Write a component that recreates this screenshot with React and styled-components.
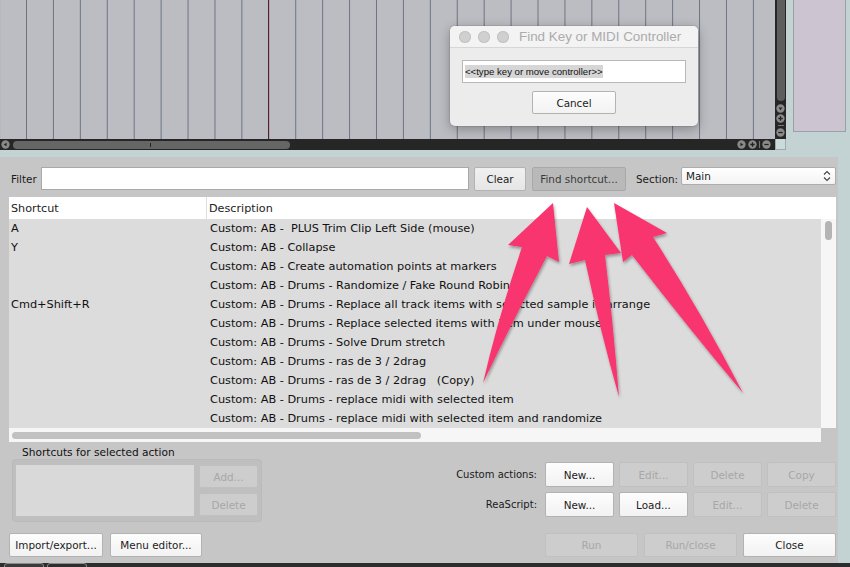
import React from 'react'
import styled, { createGlobalStyle } from 'styled-components'

const UI = '"DejaVu Sans", "Liberation Sans", sans-serif'

const rows = [
    ['A', 'Custom: AB -  PLUS Trim Clip Left Side (mouse)'],
    ['Y', 'Custom: AB - Collapse'],
    ['', 'Custom: AB - Create automation points at markers'],
    ['', 'Custom: AB - Drums - Randomize / Fake Round Robin'],
    ['Cmd+Shift+R', 'Custom: AB - Drums - Replace all track items with selected sample in arrange'],
    ['', 'Custom: AB - Drums - Replace selected items with item under mouse'],
    ['', 'Custom: AB - Drums - Solve Drum stretch'],
    ['', 'Custom: AB - Drums - ras de 3 / 2drag'],
    ['', 'Custom: AB - Drums - ras de 3 / 2drag   (Copy)'],
    ['', 'Custom: AB - Drums - replace midi with selected item'],
    ['', 'Custom: AB - Drums - replace midi with selected item and randomize'],
]

const RoundIcon = ({ kind }) => (
    <svg width="9" height="9" viewBox="0 0 10 10">
        <circle cx="5" cy="5" r="4.6" fill="#8a8a8a" />
        {kind === 'play' && <path d="M3.8 3 L7 5 L3.8 7 Z" fill="#222" />}
        {kind === 'back' && <path d="M6.2 3 L3 5 L6.2 7 Z" fill="#222" />}
        {kind === 'down' && <path d="M3 3.8 L5 7 L7 3.8 Z" fill="#222" />}
        {kind === 'plus' && <path d="M5 2.6 V7.4 M2.6 5 H7.4" stroke="#222" strokeWidth="1.4" />}
        {kind === 'minus' && <path d="M2.6 5 H7.4" stroke="#222" strokeWidth="1.4" />}
    </svg>
)

const App = () => {
    return (
        <>
            <GlobalStyle />
            <Screen>
                <ArrangeArea>
                    <TrackView>
                        <Timeline />
                        <VScroll>
                            <VThumb />
                            <ScrollButtons $vertical>
                                <RoundIcon kind="down" />
                                <RoundIcon kind="plus" />
                                <Tick $vertical />
                                <RoundIcon kind="minus" />
                            </ScrollButtons>
                        </VScroll>
                        <HScroll>
                            <RoundIcon kind="back" />
                            <HThumb>
                                <ThumbMark />
                            </HThumb>
                            <ScrollButtons>
                                <RoundIcon kind="play" />
                                <RoundIcon kind="plus" />
                                <Tick />
                                <RoundIcon kind="minus" />
                            </ScrollButtons>
                        </HScroll>
                        <Corner />
                    </TrackView>
                    <SidePanel />
                </ArrangeArea>

                <ActionsWindow>
                    <FilterRow>
                        <Label $w={30}>Filter</Label>
                        <TextInput />
                        <Button $w={52} $ml={5} $tone="light">Clear</Button>
                        <Button $w={94} $ml={6} $tone="pressed">Find shortcut...</Button>
                        <Label $ml={10}>Section:</Label>
                        <Select>
                            <span>Main</span>
                            <svg width="8" height="12" viewBox="0 0 8 12">
                                <path d="M1 4.5 L4 1.5 L7 4.5 M1 7.5 L4 10.5 L7 7.5" fill="none" stroke="#444" strokeWidth="1.1" />
                            </svg>
                        </Select>
                    </FilterRow>

                    <ActionList>
                        <ListHeader>
                            <HeaderCell $first>Shortcut</HeaderCell>
                            <HeaderCell>Description</HeaderCell>
                        </ListHeader>
                        <ListBody>
                            <Rows>
                                {rows.map(([key, desc], i) => (
                                    <Row key={i}>
                                        <KeyCell>{key}</KeyCell>
                                        <DescCell>{desc}</DescCell>
                                    </Row>
                                ))}
                            </Rows>
                            <ListVScroll>
                                <ListVThumb />
                            </ListVScroll>
                        </ListBody>
                        <ListFooter>
                            <ListHScroll>
                                <ListHThumb />
                            </ListHScroll>
                            <ListCorner />
                        </ListFooter>
                    </ActionList>

                    <MidRow>
                        <ShortcutGroup>
                            <GroupTitle>Shortcuts for selected action</GroupTitle>
                            <GroupBox>
                                <ShortcutBox />
                                <ButtonColumn>
                                    <Button $w={59} $h={23} disabled>Add...</Button>
                                    <Button $w={59} $h={23} disabled>Delete</Button>
                                </ButtonColumn>
                            </GroupBox>
                        </ShortcutGroup>
                        <ActionGrid>
                            <GridLabel>Custom actions:</GridLabel>
                            <Button $h={25}>New...</Button>
                            <Button $h={25} disabled>Edit...</Button>
                            <Button $h={25} disabled>Delete</Button>
                            <Button $h={25} disabled>Copy</Button>
                            <GridLabel>ReaScript:</GridLabel>
                            <Button $h={25}>New...</Button>
                            <Button $h={25}>Load...</Button>
                            <Button $h={25} disabled>Edit...</Button>
                            <Button $h={25} disabled>Delete</Button>
                        </ActionGrid>
                    </MidRow>

                    <BottomRow>
                        <Button $w={94}>Import/export...</Button>
                        <Button $w={92} $ml={7}>Menu editor...</Button>
                        <Spacer />
                        <Button $w={93} disabled>Run</Button>
                        <Button $w={93} $ml={6} disabled>Run/close</Button>
                        <Button $w={93} $ml={6}>Close</Button>
                    </BottomRow>
                </ActionsWindow>

                <Taskbar>
                    <TaskTab $active />
                    <TaskTab />
                </Taskbar>

                <FindDialog>
                    <TitleBar>
                        <Light />
                        <Light />
                        <Light />
                        <DialogTitle>Find Key or MIDI Controller</DialogTitle>
                    </TitleBar>
                    <DialogBody>
                        <KeyField>
                            <Selected>&lt;&lt;type key or move controller&gt;&gt;</Selected>
                        </KeyField>
                        <Button $w={84} $h={23}>Cancel</Button>
                    </DialogBody>
                </FindDialog>

                <Arrows viewBox="0 0 850 567">
                    <defs>
                        <filter id="sh" x="-20%" y="-20%" width="140%" height="140%">
                            <feDropShadow dx="1" dy="2" stdDeviation="1.6" floodColor="#000" floodOpacity="0.35" />
                        </filter>
                    </defs>
                    <g fill="#f9346f" filter="url(#sh)">
                        <path d="M553 203 L508 245 L522 247 Q498 318 483 383 Q514 318 547 256 L559 262 Z" />
                        <path d="M587 207 L569 264 L585 260 Q600 330 619 397 Q613 322 605 255 L621 253 Z" />
                        <path d="M614 203 L623 262 L632 255 Q690 330 743 393 Q700 310 653 237 L667 233 Z" />
                    </g>
                </Arrows>
            </Screen>
        </>
    )
}

const GlobalStyle = createGlobalStyle`
    body {
        margin: 0;
        background: #c3d2d2;
        overflow: hidden;
    }
`

const Screen = styled.div`
    position: relative;
    width: 850px;
    height: 567px;
    overflow: hidden;
    display: flex;
    flex-direction: column;
    background: #c3d2d2;
    font-family: ${UI};
`

const ArrangeArea = styled.div`
    height: 157px;
    display: flex;
    align-items: flex-start;
    flex-shrink: 0;
`

const TrackView = styled.div`
    display: grid;
    grid-template-columns: 775px 11px;
    grid-template-rows: 139px 11px;
`

const Timeline = styled.div`
    background-color: #bcbdc2;
    background-image:
        linear-gradient(to right, transparent 268px, #5c1d24 268px, #5c1d24 269px, transparent 269px),
        linear-gradient(to right, #6c7484 1px, transparent 1px);
    background-size: 100% 100%, 26.93px 100%;
    background-position: 0 0, 26px 0;
    background-repeat: no-repeat, repeat-x;
`

const VScroll = styled.div`
    background: #262626;
    display: flex;
    flex-direction: column;
    align-items: center;
`

const VThumb = styled.div`
    width: 8px;
    height: 101px;
    background: #5e5e5e;
    border-radius: 0 0 4px 4px;
`

const ScrollButtons = styled.div`
    display: flex;
    flex-direction: ${(p) => (p.$vertical ? 'column' : 'row')};
    align-items: center;
    gap: ${(p) => (p.$vertical ? '1px' : '2px')};
    margin: ${(p) => (p.$vertical ? '3px 0 0 0' : '0 4px 0 auto')};
`

const Tick = styled.div`
    background: #777;
    width: ${(p) => (p.$vertical ? '6px' : '1px')};
    height: ${(p) => (p.$vertical ? '1px' : '7px')};
    margin: ${(p) => (p.$vertical ? '1px 0' : '0')};
`

const HScroll = styled.div`
    background: #262626;
    display: flex;
    align-items: center;
    padding-left: 1px;
`

const HThumb = styled.div`
    position: relative;
    margin-left: 3px;
    width: 277px;
    height: 8px;
    border-radius: 4px;
    background: #666;
`

const ThumbMark = styled.div`
    position: absolute;
    left: 137px;
    top: 2px;
    width: 1px;
    height: 4px;
    background: #222;
`

const Corner = styled.div`
    background: #cbdada;
    border: 1px solid #9fabab;
    border-top: none;
`

const SidePanel = styled.div`
    margin-left: 7px;
    width: 51px;
    height: 131px;
    background: #ccc5d1;
    border: 1px solid #98a2a6;
    border-top: none;
`

const ActionsWindow = styled.div`
    width: 838px;
    box-sizing: border-box;
    flex: 1;
    background: #c6c6c6;
    padding: 10px 2px 0 9px;
    display: flex;
    flex-direction: column;
`

const FilterRow = styled.div`
    display: flex;
    align-items: center;
    height: 24px;
`

const Label = styled.span`
    font-size: 10.4px;
    color: #1a1a1a;
    margin-left: ${(p) => p.$ml || 2}px;
    width: ${(p) => (p.$w ? `${p.$w}px` : 'auto')};
`

const TextInput = styled.div`
    width: 426px;
    height: 21px;
    background: #fff;
    border: 1px solid #a9a9a9;
    align-self: flex-start;
`

const Button = styled.button`
    width: ${(p) => (p.$w ? `${p.$w}px` : 'auto')};
    height: ${(p) => p.$h || 24}px;
    margin-left: ${(p) => p.$ml || 0}px;
    padding: 0;
    box-sizing: border-box;
    font-family: ${UI};
    font-size: 10.4px;
    border: 1px solid #b3b3b3;
    border-radius: 2px;
    background: ${(p) =>
        p.$tone === 'pressed'
            ? '#b9b9b9'
            : p.$tone === 'light'
            ? 'linear-gradient(#f0f0f0, #e6e6e6)'
            : 'linear-gradient(#fdfdfd, #f2f2f2)'};
    border-color: ${(p) => (p.$tone === 'pressed' ? '#a8a8a8' : '#b3b3b3')};
    color: ${(p) => (p.$tone === 'pressed' ? '#3a3a3a' : '#1c1c1c')};

    &:disabled {
        background: #cdcdcd;
        border-color: #c0c0c0;
        color: #a7a7a7;
    }
`

const Select = styled.div`
    margin-left: auto;
    align-self: flex-start;
    width: 155px;
    height: 18px;
    box-sizing: border-box;
    border: 1px solid #adadad;
    border-radius: 2px;
    background: linear-gradient(#ffffff, #f3f3f3);
    display: flex;
    align-items: center;
    justify-content: space-between;
    padding: 0 4px;
    font-size: 10.4px;
    color: #1a1a1a;
`

const ActionList = styled.div`
    margin-top: 6px;
    width: 827px;
    height: 245px;
    display: flex;
    flex-direction: column;
`

const ListHeader = styled.div`
    height: 22px;
    background: #fff;
    display: grid;
    grid-template-columns: 198px 1fr;
    align-items: center;
    font-size: 11.2px;
    color: #222;
`

const HeaderCell = styled.div`
    padding-left: 2px;
    height: 100%;
    display: flex;
    align-items: center;
    border-right: ${(p) => (p.$first ? '1px solid #dedede' : 'none')};
`

const ListBody = styled.div`
    display: flex;
    height: 209px;
`

const Rows = styled.div`
    width: 812px;
    background: #dcdcdc;
    overflow: hidden;
`

const Row = styled.div`
    height: 19px;
    display: grid;
    grid-template-columns: 201px 1fr;
    align-items: center;
    font-size: 11.3px;
    color: #111;
    white-space: pre;
`

const KeyCell = styled.div`
    padding-left: 2px;
`

const DescCell = styled.div``

const ListVScroll = styled.div`
    width: 15px;
    background: #f6f6f6;
    display: flex;
    justify-content: center;
    padding-top: 2px;
    box-sizing: border-box;
`

const ListVThumb = styled.div`
    width: 7px;
    height: 19px;
    border-radius: 4px;
    background: #b4b4b4;
`

const ListFooter = styled.div`
    display: flex;
    height: 14px;
`

const ListHScroll = styled.div`
    width: 812px;
    background: #f6f6f6;
    display: flex;
    align-items: center;
    padding-left: 3px;
    box-sizing: border-box;
`

const ListHThumb = styled.div`
    width: 409px;
    height: 7px;
    border-radius: 4px;
    background: #c1c1c1;
`

const ListCorner = styled.div`
    flex: 1;
    background: #c6c6c6;
`

const MidRow = styled.div`
    height: 91px;
    display: flex;
    justify-content: space-between;
`

const ShortcutGroup = styled.div`
    display: flex;
    flex-direction: column;
    padding-left: 3px;
`

const GroupTitle = styled.div`
    font-size: 10.6px;
    color: #111;
    padding: 4px 0 0 10px;
    height: 13px;
`

const GroupBox = styled.div`
    width: 250px;
    height: 63px;
    box-sizing: border-box;
    border-radius: 4px;
    background: #bfbfbf;
    border: 1px solid #bababa;
    padding: 5px 3px;
    display: flex;
    gap: 5px;
`

const ShortcutBox = styled.div`
    width: 178px;
    height: 51px;
    background: #d9d9d9;
`

const ButtonColumn = styled.div`
    display: flex;
    flex-direction: column;
    gap: 5px;
`

const ActionGrid = styled.div`
    margin-top: 20px;
    display: grid;
    grid-template-columns: auto repeat(4, 69px);
    grid-auto-rows: 25px;
    column-gap: 5px;
    row-gap: 5px;
    align-self: flex-start;
`

const GridLabel = styled.div`
    font-size: 10px;
    color: #1a1a1a;
    display: flex;
    align-items: center;
    justify-content: flex-end;
    padding-right: 3px;
`

const BottomRow = styled.div`
    display: flex;
    height: 24px;
`

const Spacer = styled.div`
    flex: 1;
`

const Taskbar = styled.div`
    height: 4px;
    background: #2d2d2d;
    display: flex;
    gap: 3px;
    padding-left: 4px;
    overflow: hidden;
    flex-shrink: 0;
`

const TaskTab = styled.div`
    width: 38px;
    height: 8px;
    border: 1px solid #8a8a8a;
    border-radius: 3px 3px 0 0;
    background: ${(p) => (p.$active ? '#3a3a3a' : '#2d2d2d')};
`

const FindDialog = styled.div`
    position: absolute;
    left: 450px;
    top: 26px;
    width: 248px;
    height: 100px;
    border-radius: 5px;
    background: #ececec;
    box-shadow: 0 3px 12px rgba(0, 0, 0, 0.3), 0 0 0 1px rgba(0, 0, 0, 0.08);
    overflow: hidden;
    display: flex;
    flex-direction: column;
`

const TitleBar = styled.div`
    height: 21px;
    background: #f3f3f3;
    border-bottom: 1px solid #d6d6d6;
    display: flex;
    align-items: center;
    padding-left: 9px;
    gap: 7px;
`

const Light = styled.div`
    width: 12px;
    height: 12px;
    border-radius: 50%;
    background: #d0d0d0;
    box-shadow: inset 0 0 0 1px #c3c3c3;
`

const DialogTitle = styled.div`
    margin-left: 3px;
    font-family: 'Liberation Sans', Arial, sans-serif;
    font-size: 13.4px;
    color: #ababab;
`

const DialogBody = styled.div`
    display: flex;
    flex-direction: column;
    align-items: center;
    padding-top: 12px;
    gap: 8px;
`

const KeyField = styled.div`
    width: 224px;
    height: 23px;
    box-sizing: border-box;
    background: #fff;
    border: 1px solid #b8b8b8;
    display: flex;
    align-items: center;
    padding-left: 2px;
`

const Selected = styled.span`
    background: #d6d6d6;
    font-family: 'Liberation Sans', Arial, sans-serif;
    font-size: 9.6px;
    color: #111;
    padding: 1px 0;
`

const Arrows = styled.svg`
    position: absolute;
    left: 0;
    top: 0;
    width: 850px;
    height: 567px;
    pointer-events: none;
`

export default App
